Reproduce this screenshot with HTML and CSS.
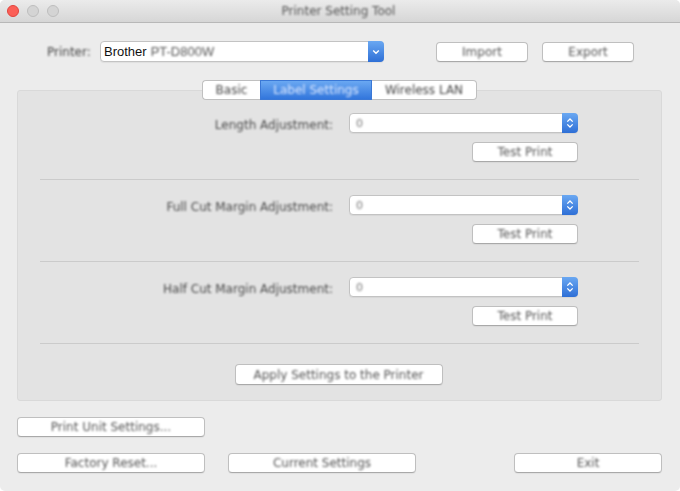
FILE: index.html
```html
<!DOCTYPE html>
<html>
<head>
<meta charset="utf-8">
<link rel="stylesheet" href="styles.css">
</head>
<body>
<div class="window">
  <div class="titlebar">
    <div class="lights">
      <span class="light red"></span>
      <span class="light"></span>
      <span class="light"></span>
    </div>
    <div class="title"><span class="blur">Printer Setting Tool</span></div>
  </div>
  <div class="content">
    <div class="printer-row">
      <span class="printer-label blur">Printer:</span>
      <div class="select printer-select">
        <span class="select-text">Brother <span class="blur">PT-D800W</span></span>
        <span class="select-arrow single">
          <svg width="8" height="6" viewBox="0 0 8 6"><path d="M1.2 1.5 L4 4.3 L6.8 1.5" fill="none" stroke="#fff" stroke-width="1.4"/></svg>
        </span>
      </div>
      <button class="btn import"><span class="blur">Import</span></button>
      <button class="btn export"><span class="blur">Export</span></button>
    </div>

    <div class="tabs">
      <span class="tab"><span class="blur">Basic</span></span>
      <span class="tab active"><span class="blur">Label Settings</span></span>
      <span class="tab"><span class="blur">Wireless LAN</span></span>
    </div>

    <div class="group">
      <div class="setting">
        <div class="setting-row">
          <span class="setting-label blur">Length Adjustment:</span>
          <div class="select value-select">
            <span class="select-text"><span class="blur">0</span></span>
            <span class="select-arrow">
              <svg width="8" height="12" viewBox="0 0 8 12"><path d="M1.3 4.6 L4 2 L6.7 4.6 M1.3 7.4 L4 10 L6.7 7.4" fill="none" stroke="#fff" stroke-width="1.3"/></svg>
            </span>
          </div>
        </div>
        <div class="test-row"><button class="btn test"><span class="blur">Test Print</span></button></div>
      </div>
      <div class="sep"></div>
      <div class="setting">
        <div class="setting-row">
          <span class="setting-label blur">Full Cut Margin Adjustment:</span>
          <div class="select value-select">
            <span class="select-text"><span class="blur">0</span></span>
            <span class="select-arrow">
              <svg width="8" height="12" viewBox="0 0 8 12"><path d="M1.3 4.6 L4 2 L6.7 4.6 M1.3 7.4 L4 10 L6.7 7.4" fill="none" stroke="#fff" stroke-width="1.3"/></svg>
            </span>
          </div>
        </div>
        <div class="test-row"><button class="btn test"><span class="blur">Test Print</span></button></div>
      </div>
      <div class="sep"></div>
      <div class="setting">
        <div class="setting-row">
          <span class="setting-label blur">Half Cut Margin Adjustment:</span>
          <div class="select value-select">
            <span class="select-text"><span class="blur">0</span></span>
            <span class="select-arrow">
              <svg width="8" height="12" viewBox="0 0 8 12"><path d="M1.3 4.6 L4 2 L6.7 4.6 M1.3 7.4 L4 10 L6.7 7.4" fill="none" stroke="#fff" stroke-width="1.3"/></svg>
            </span>
          </div>
        </div>
        <div class="test-row"><button class="btn test"><span class="blur">Test Print</span></button></div>
      </div>
      <div class="sep"></div>
      <div class="apply-row">
        <button class="btn apply"><span class="blur">Apply Settings to the Printer</span></button>
      </div>
    </div>

    <div class="bottom">
      <div class="bottom-row">
        <button class="btn wide"><span class="blur">Print Unit Settings...</span></button>
      </div>
      <div class="bottom-row">
        <button class="btn wide"><span class="blur">Factory Reset...</span></button>
        <button class="btn wide current"><span class="blur">Current Settings</span></button>
        <button class="btn exit"><span class="blur">Exit</span></button>
      </div>
    </div>
  </div>
</div>
</body>
</html>
```

FILE: styles.css
```css
* { box-sizing: border-box; }
html, body { margin: 0; padding: 0; background: #ffffff; }
body { font-family: "DejaVu Sans", "Liberation Sans", sans-serif; font-size: 12px; color: #444; }

.window {
  width: 680px;
  height: 491px;
  background: #ececec;
  border-radius: 5px;
  overflow: hidden;
  display: flex;
  flex-direction: column;
}

.blur { filter: blur(1px); }

.titlebar {
  height: 23px;
  flex: none;
  background: linear-gradient(#ebebeb, #d6d6d6);
  border-bottom: 1px solid #b8b8b8;
  display: flex;
  align-items: center;
  position: relative;
}
.lights { display: flex; gap: 8px; padding-left: 7px; }
.light {
  width: 12px; height: 12px; border-radius: 50%;
  background: #d4d4d4; border: 1px solid #bdbdbd;
}
.light.red { background: #fb5f57; border-color: #e0443e; }
.title {
  flex: 1;
  text-align: center;
  margin-right: 62px;
  font-size: 12px;
  color: #555;
}

.content { padding: 0 18px 0 17px; display: flex; flex-direction: column; }

.printer-row {
  display: flex;
  align-items: center;
  margin-top: 18px;
  height: 21px;
}
.printer-label { margin-left: 30px; width: 53px; color: #444; }

.select {
  height: 21px;
  background: #fff;
  border: 1px solid #c3c3c3;
  border-radius: 4px;
  display: flex;
  align-items: stretch;
  box-shadow: 0 1px 1px rgba(0,0,0,0.06);
}
.select-text {
  flex: 1; padding-left: 3px; display: flex; align-items: center; gap: 4px;
  font-family: "Liberation Sans", Arial, sans-serif; font-size: 13px; color: #111;
}
.value-select .select-text { font-family: "DejaVu Sans", sans-serif; font-size: 11px; color: #777; padding-left: 6px; }
.select-arrow {
  width: 16px;
  margin: -1px -1px -1px 0;
  border-radius: 0 4px 4px 0;
  background: linear-gradient(#6aa8f2, #2e6fd6);
  display: flex;
  align-items: center;
  justify-content: center;
}
.printer-select { width: 284px; }
.printer-select .select-text .blur { color: #555; }

.btn {
  font-family: inherit;
  font-size: 12px;
  color: #555;
  background: #fff;
  border: 1px solid #bfbfbf;
  border-bottom-color: #a9a9a9;
  border-radius: 4px;
  height: 20px;
  padding: 0;
  display: flex;
  align-items: center;
  justify-content: center;
  box-shadow: 0 1px 1px rgba(0,0,0,0.05);
}
.import { width: 92px; margin-left: 52px; }
.export { width: 92px; margin-left: 14px; }

.tabs {
  display: flex;
  justify-content: center;
  margin-top: 18px;
  margin-bottom: -10px;
  position: relative;
  z-index: 1;
}
.tab {
  height: 20px;
  background: #fff;
  border: 1px solid #c0c0c0;
  display: flex;
  align-items: center;
  justify-content: center;
  color: #444;
}
.tab:nth-child(1) { width: 58px; border-radius: 4px 0 0 4px; border-right: none; }
.tab:nth-child(2) { width: 112px; }
.tab:nth-child(3) { width: 105px; border-radius: 0 4px 4px 0; border-left: none; }
.tab.active {
  background: linear-gradient(#6aa8f2, #3276dc);
  border-color: #3a78d6;
  color: #dde9ff;
}

.group {
  width: 645px;
  height: 311px;
  background: #e3e3e3;
  border: 1px solid #d9d9d9;
  border-radius: 3px;
  padding: 22px 22px 0 22px;
  display: flex;
  flex-direction: column;
}
.setting-row { display: flex; align-items: center; height: 20px; }
.setting-label {
  width: 293px;
  text-align: right;
  color: #4a4a4a;
  padding-top: 3px;
}
.value-select { width: 229px; height: 20px; margin-left: 16px; }
.test-row { display: flex; justify-content: flex-end; padding-right: 61px; margin-top: 9px; }
.test { width: 106px; }
.sep { height: 1px; background: #cbcbcb; margin: 17px 0 15px 0; }
.apply-row { display: flex; justify-content: center; margin-top: 5px; }
.apply { width: 208px; height: 21px; position: relative; left: -1px; }

.bottom { display: flex; flex-direction: column; gap: 16px; margin-top: 16px; }
.bottom-row { display: flex; }
.wide { width: 188px; }
.current { margin-left: 23px; }
.exit { width: 148px; margin-left: auto; }
```
